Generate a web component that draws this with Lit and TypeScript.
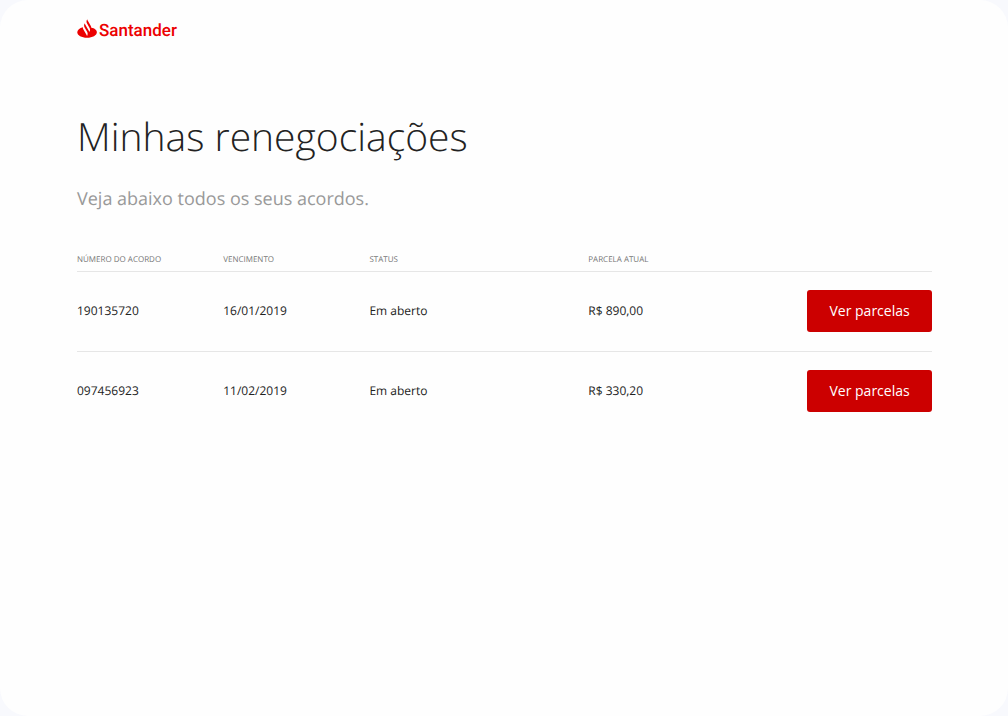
import { LitElement, html, css } from "lit";
import { customElement, property, state } from "lit/decorators.js";

interface Agreement {
  id: string;
  dueDate: string;
  status: string;
  installment: string;
}

@customElement("brand-logo")
export class BrandLogo extends LitElement {
  static styles = css`
    :host {
      display: block;
    }
    .logo {
      display: flex;
      width: fit-content;
      align-items: flex-start;
      gap: 2px;
      color: #ec0000;
      text-decoration: none;
      font: 500 17px/24px Roboto, sans-serif;
    }
    .flame {
      display: block;
      width: 20px;
      height: 19px;
      fill: currentColor;
    }
  `;

  render() {
    return html`
      <a class="logo" href="#">
        <svg class="flame" viewBox="0 0 32 30" aria-hidden="true">
          <path
            d="M22.900 13.800c-.1-1.200-.4-2.300-1-3.400l-4.800-8.300c-.4-.6-.6-1.300-.8-2l-.2.300c-1.200 2-1.200 4.600 0 6.600l3.800 6.700c1.200 2 1.200 4.600 0 6.600l-.2.300c-.1-.7-.4-1.400-.8-2l-3.500-6.100-2.200-3.900c-.4-.6-.6-1.300-.8-2l-.2.300c-1.200 2-1.200 4.500 0 6.600l3.900 6.700c1.200 2 1.200 4.600 0 6.600l-.2.300c-.1-.7-.4-1.400-.8-2l-4.800-8.400c-.7-1.100-1-2.400-.9-3.700C4.200 14.500.4 17.500.4 21c0 4.900 7 8.800 15.700 8.800S31.800 25.900 31.800 21c.1-3.400-3.700-6.400-8.900-7.200z"
          />
        </svg>
        <span>Santander</span>
      </a>
    `;
  }
}

@customElement("agreements-table")
export class AgreementsTable extends LitElement {
  @property({ attribute: false }) agreements: Agreement[] = [];

  static styles = css`
    :host {
      display: block;
    }
    .table {
      width: 100%;
      table-layout: fixed;
      border-collapse: collapse;
      text-align: left;
    }
    .col-narrow {
      width: 17.1%;
    }
    .col-wide {
      width: 25.6%;
    }
    .head {
      padding: 0 0 4px;
      font-size: 8px;
      line-height: 14px;
      font-weight: 400;
      color: #767676;
      text-transform: uppercase;
    }
    .row {
      border-top: 1px solid #e6e6e6;
    }
    .cell {
      padding: 18px 0 19px;
      font-size: 12px;
      line-height: 18px;
      color: #222;
    }
    .button {
      display: block;
      width: 100%;
      padding: 11px 0;
      border: 0;
      border-radius: 3px;
      background: #cc0000;
      color: #fff;
      font: 400 14px/20px "Open Sans", sans-serif;
      cursor: pointer;
    }
  `;

  render() {
    return html`
      <table class="table">
        <colgroup>
          <col class="col-narrow" />
          <col class="col-narrow" />
          <col class="col-wide" />
          <col class="col-wide" />
          <col />
        </colgroup>
        <thead>
          <tr>
            <th class="head" scope="col">Número do acordo</th>
            <th class="head" scope="col">Vencimento</th>
            <th class="head" scope="col">Status</th>
            <th class="head" scope="col">Parcela atual</th>
            <td class="head"></td>
          </tr>
        </thead>
        <tbody>
          ${this.agreements.map(
            (item) => html`
              <tr class="row">
                <td class="cell">${item.id}</td>
                <td class="cell">${item.dueDate}</td>
                <td class="cell">${item.status}</td>
                <td class="cell">${item.installment}</td>
                <td class="cell">
                  <button class="button" type="button">Ver parcelas</button>
                </td>
              </tr>
            `
          )}
        </tbody>
      </table>
    `;
  }
}

@customElement("app-root")
export class AppRoot extends LitElement {
  @state() private agreements: Agreement[] = [
    { id: "190135720", dueDate: "16/01/2019", status: "Em aberto", installment: "R$ 890,00" },
    { id: "097456923", dueDate: "11/02/2019", status: "Em aberto", installment: "R$ 330,20" },
  ];

  static styles = css`
    :host {
      display: block;
      background: #f8f9fd;
      font-family: "Open Sans", sans-serif;
      text-rendering: geometricPrecision;
    }
    .page {
      box-sizing: border-box;
      min-height: 100vh;
      padding: 19px 76px 48px 77px;
      border-radius: 28px;
      background: #fefefe;
    }
    .title {
      margin: 62px 0 0;
      font-size: 39px;
      line-height: 64px;
      font-weight: 300;
      color: #222;
    }
    .subtitle {
      margin: 16px 0 40px;
      font-size: 18px;
      line-height: 28px;
      color: #999;
    }
  `;

  render() {
    return html`
      <div class="page">
        <header><brand-logo></brand-logo></header>
        <main>
          <h1 class="title">Minhas renegociações</h1>
          <p class="subtitle">Veja abaixo todos os seus acordos.</p>
          <agreements-table .agreements=${this.agreements}></agreements-table>
        </main>
      </div>
    `;
  }
}
